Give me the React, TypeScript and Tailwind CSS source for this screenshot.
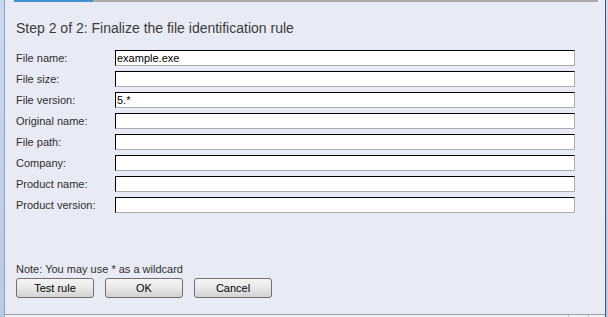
import React from 'react';

const fields: { label: string; value: string }[] = [
  { label: 'File name:', value: 'example.exe' },
  { label: 'File size:', value: '' },
  { label: 'File version:', value: '5.*' },
  { label: 'Original name:', value: '' },
  { label: 'File path:', value: '' },
  { label: 'Company:', value: '' },
  { label: 'Product name:', value: '' },
  { label: 'Product version:', value: '' },
];

const Button: React.FC<{ label: string }> = ({ label }) => (
  <button className="w-[78px] h-[20px] rounded-[3px] border border-[#707070] bg-gradient-to-b from-[#f4f4f4] via-[#e8e8e8] to-[#d2d2d2] text-[11px] leading-none text-black">
    {label}
  </button>
);

const App: React.FC = () => {
  return (
    <div
      className="w-[608px] h-[317px] flex overflow-hidden bg-[#e8ebf5]"
      style={{ fontFamily: '"Liberation Sans", Arial, sans-serif' }}
    >
      {/* window frame, left */}
      <div className="w-[4px] bg-gradient-to-b from-[#c9d9ee] to-[#b6cbe6]" />
      <div className="w-[1px] bg-[#8fa3bd]" />

      {/* main panel */}
      <div className="flex-1 flex flex-col">
        {/* tab strip edge */}
        <div className="h-[3px] flex items-start">
          <div className="w-[9px]" />
          <div className="w-[79px] h-[2px] bg-[#3f8fd2]" />
          <div className="flex-1 h-[2px] bg-[#a9a9a9]" />
          <div className="w-[7px]" />
        </div>

        <div className="flex-1 flex flex-col pl-[11px]">
          <h1 className="mt-[17px] h-[17px] text-[14px] leading-[17px] text-[#3b3b3b] font-normal">
            Step 2 of 2: Finalize the file identification rule
          </h1>

          {/* form rows */}
          <div className="mt-[13px] flex flex-col gap-[5px]">
            {fields.map((f) => (
              <div key={f.label} className="flex items-center h-[16px]">
                <div className="w-[99px] text-[11px] leading-none text-[#2e2e2e]">{f.label}</div>
                <div className="w-[460px] h-[16px] bg-white border-t border-l border-black border-b border-r border-b-[#adadad] border-r-[#adadad] flex items-center pl-[1px] text-[11px] leading-none text-black">
                  {f.value}
                </div>
              </div>
            ))}
          </div>

          <div className="flex-1" />

          <p className="text-[11px] leading-[13px] text-[#2e2e2e]">Note: You may use * as a wildcard</p>
          <div className="mt-[2px] flex gap-[11px]">
            <Button label="Test rule" />
            <Button label="OK" />
            <Button label="Cancel" />
          </div>
          <div className="h-[16px]" />
        </div>

        {/* bottom edge */}
        <div className="h-[3px] border-t border-[#a0a0a0] bg-[#f2f2f2] flex">
          <div className="flex-1" />
          <div className="w-[1px] bg-[#c8c8c8]" />
          <div className="w-[19px]" />
          <div className="w-[1px] bg-[#c8c8c8]" />
          <div className="w-[16px]" />
        </div>
      </div>

      {/* window frame, right */}
      <div className="w-[1px] bg-[#4e5561]" />
      <div className="w-[2px] bg-gradient-to-b from-[#c9d9ee] to-[#b6cbe6]" />
    </div>
  );
};

export default App;
